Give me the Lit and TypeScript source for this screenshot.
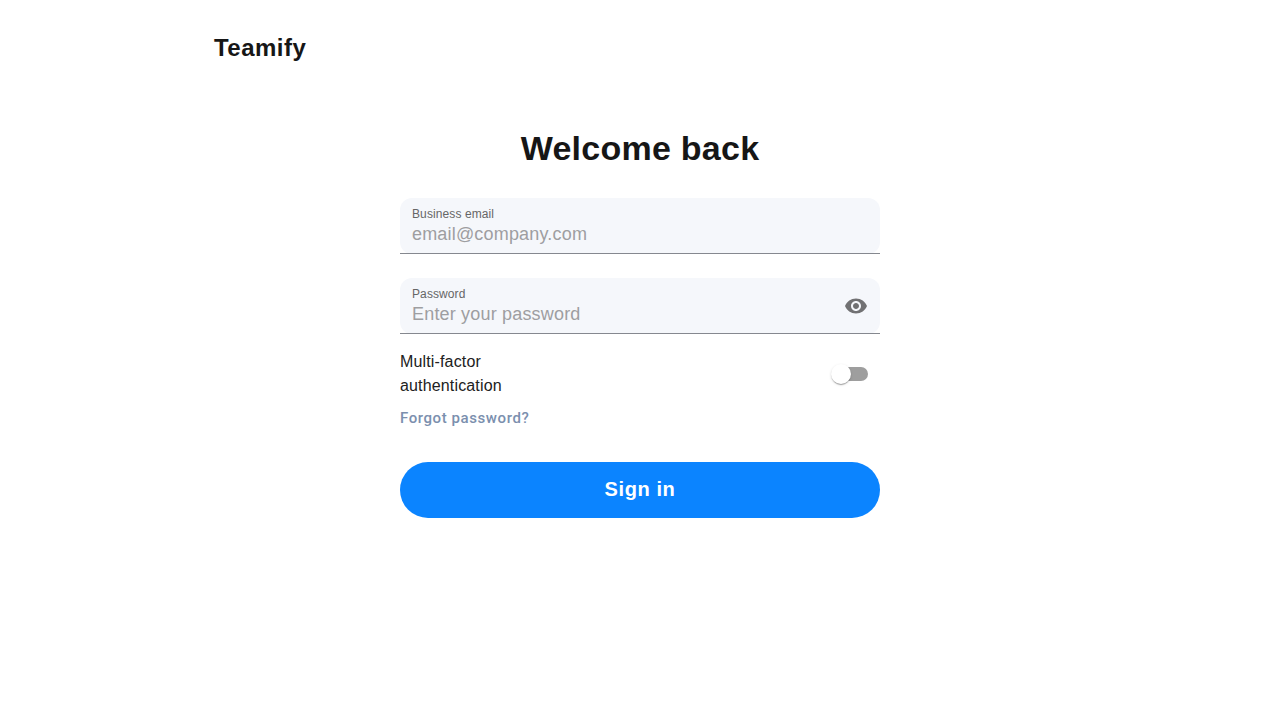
import { LitElement, html, css } from "lit";
import { customElement, property, state } from "lit/decorators.js";

@customElement("text-field")
class TextField extends LitElement {
  @property() label = "";
  @property() placeholder = "";
  @property() type = "text";

  static styles = css`
    :host { display: block; }
    .wrap { border-bottom: 1px solid #85888f; height: 55px; overflow: hidden; }
    .field {
      box-sizing: border-box; height: 56px; display: flex; align-items: center;
      padding: 0 12px; border-radius: 12px; background: #f5f7fb;
    }
    .text { flex: 1; display: flex; flex-direction: column; }
    .label { font-size: 12px; line-height: 16px; color: #666; letter-spacing: 0.1px; }
    .input {
      border: 0; padding: 0; margin: 0; outline: none; background: none; height: 24px;
      font: 18px "Liberation Sans", Arial, sans-serif; letter-spacing: 0.18px; color: #161616;
    }
    .input::placeholder { color: #9e9ea1; opacity: 1; }
  `;

  render() {
    return html`<div class="wrap"><div class="field">
      <label class="text"><span class="label">${this.label}</span>
      <input class="input" type=${this.type} placeholder=${this.placeholder} /></label>
      <slot></slot>
    </div></div>`;
  }
}

@customElement("app-root")
class AppRoot extends LitElement {
  @state() private mfa = false;

  static styles = css`
    :host { display: block; min-height: 720px; background: #fff; font-family: "Liberation Sans", Arial, sans-serif; color: #161616; }
    .header { padding: 32px 214px 0; height: 64px; box-sizing: border-box; }
    .logo { font-size: 24px; line-height: 32px; font-weight: 700; letter-spacing: 0.48px; }
    .form { width: 480px; margin: 0 auto; padding-top: 62px; }
    .title { margin: 0 0 28px; text-align: center; font-size: 34px; line-height: 44px; font-weight: 700; letter-spacing: 0.25px; }
    .password { margin-top: 24px; }
    .eye { display: block; width: 24px; height: 24px; fill: #717173; }
    .row { display: flex; justify-content: space-between; align-items: center; margin-top: 16px; }
    .row-label { width: 130px; font-size: 16px; line-height: 24px; letter-spacing: 0.15px; color: #212121; }
    .switch { width: 34px; height: 14px; margin-right: 12px; padding: 0; border: 0; border-radius: 7px; background: #9e9e9e; display: flex; align-items: center; }
    .thumb { flex: none; width: 20px; height: 20px; margin-left: -3px; border-radius: 50%; background: #fff; box-shadow: 0 2px 1px -1px rgba(0,0,0,.2), 0 1px 1px rgba(0,0,0,.14), 0 1px 3px rgba(0,0,0,.12); }
    .on { margin-left: 17px; }
    .forgot { display: block; margin-top: 8px; font: 500 15px/24px Roboto, sans-serif; letter-spacing: 0.58px; color: #7b8fae; text-decoration: none; }
    .submit { display: block; width: 480px; height: 56px; margin-top: 32px; padding: 0 0 2px; border: 0; border-radius: 28px; background: #0b84ff; color: #fff; font: 700 20px "Liberation Sans", Arial, sans-serif; letter-spacing: 0.6px; }
  `;

  render() {
    return html`
      <header class="header"><div class="logo">Teamify</div></header>
      <main class="form">
        <h1 class="title">Welcome back</h1>
        <text-field label="Business email" placeholder="email@company.com"></text-field>
        <text-field class="password" label="Password" type="password" placeholder="Enter your password">
          <svg class="eye" viewBox="0 0 24 24"><path d="M12 4.5C7 4.5 2.73 7.61 1 12c1.73 4.39 6 7.5 11 7.5s9.27-3.11 11-7.5c-1.73-4.39-6-7.5-11-7.5zM12 17c-2.76 0-5-2.24-5-5s2.24-5 5-5 5 2.24 5 5-2.24 5-5 5zm0-8c-1.66 0-3 1.34-3 3s1.34 3 3 3 3-1.34 3-3-1.34-3-3-3z"/></svg>
        </text-field>
        <div class="row">
          <span class="row-label">Multi-factor authentication</span>
          <button class="switch" role="switch" aria-label="Multi-factor authentication" aria-checked=${this.mfa} @click=${() => (this.mfa = !this.mfa)}>
            <span class="thumb ${this.mfa ? "on" : ""}"></span>
          </button>
        </div>
        <a class="forgot" href="#">Forgot password?</a>
        <button class="submit">Sign in</button>
      </main>
    `;
  }
}
